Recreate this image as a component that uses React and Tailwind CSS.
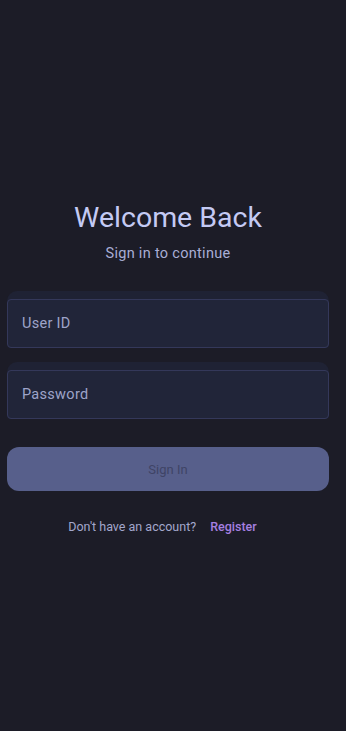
export default function App() {
  return (
    <div
      className="min-h-[731px] bg-[#1c1c27] flex flex-col pl-[7px] pr-[17px] pt-[200px]"
      style={{ fontFamily: "Roboto, 'Noto Sans', sans-serif" }}
    >
      {/* Heading */}
      <div className="flex flex-col items-center">
        <h1 className="text-[28.5px] leading-[36px] text-[#c4caf4]">Welcome Back</h1>
        <p className="mt-[8px] text-[14.5px] leading-[20px] tracking-[0.3px] text-[#a9aed6]">
          Sign in to continue
        </p>
      </div>

      {/* Fields */}
      <div className="mt-[27px] flex flex-col gap-[14px]">
        <Field label="User ID" />
        <Field label="Password" />
      </div>

      {/* Button */}
      <button className="mt-[28px] h-[44px] w-full rounded-[12px] bg-[#575f8b] pt-[1px] text-[13px] text-[#3f4466]">
        Sign In
      </button>

      {/* Register */}
      <div className="mt-[27px] mr-[11px] flex justify-center items-center gap-[14px] text-[12.5px]">
        <span className="text-[#a3a7cc]">Don't have an account?</span>
        <span className="font-medium text-[#a57fe0]">Register</span>
      </div>
    </div>
  );
}

function Field({ label }) {
  return (
    <div className="rounded-t-[10px] rounded-b-[4px] bg-[#1f2234] pt-[8px]">
      <div className="h-[49px] rounded-[4px] border border-[#34385a] bg-[#212539] flex items-center px-[14px]">
        <span className="text-[14.5px] tracking-[0.3px] text-[#9ea4c9]">{label}</span>
      </div>
    </div>
  );
}
